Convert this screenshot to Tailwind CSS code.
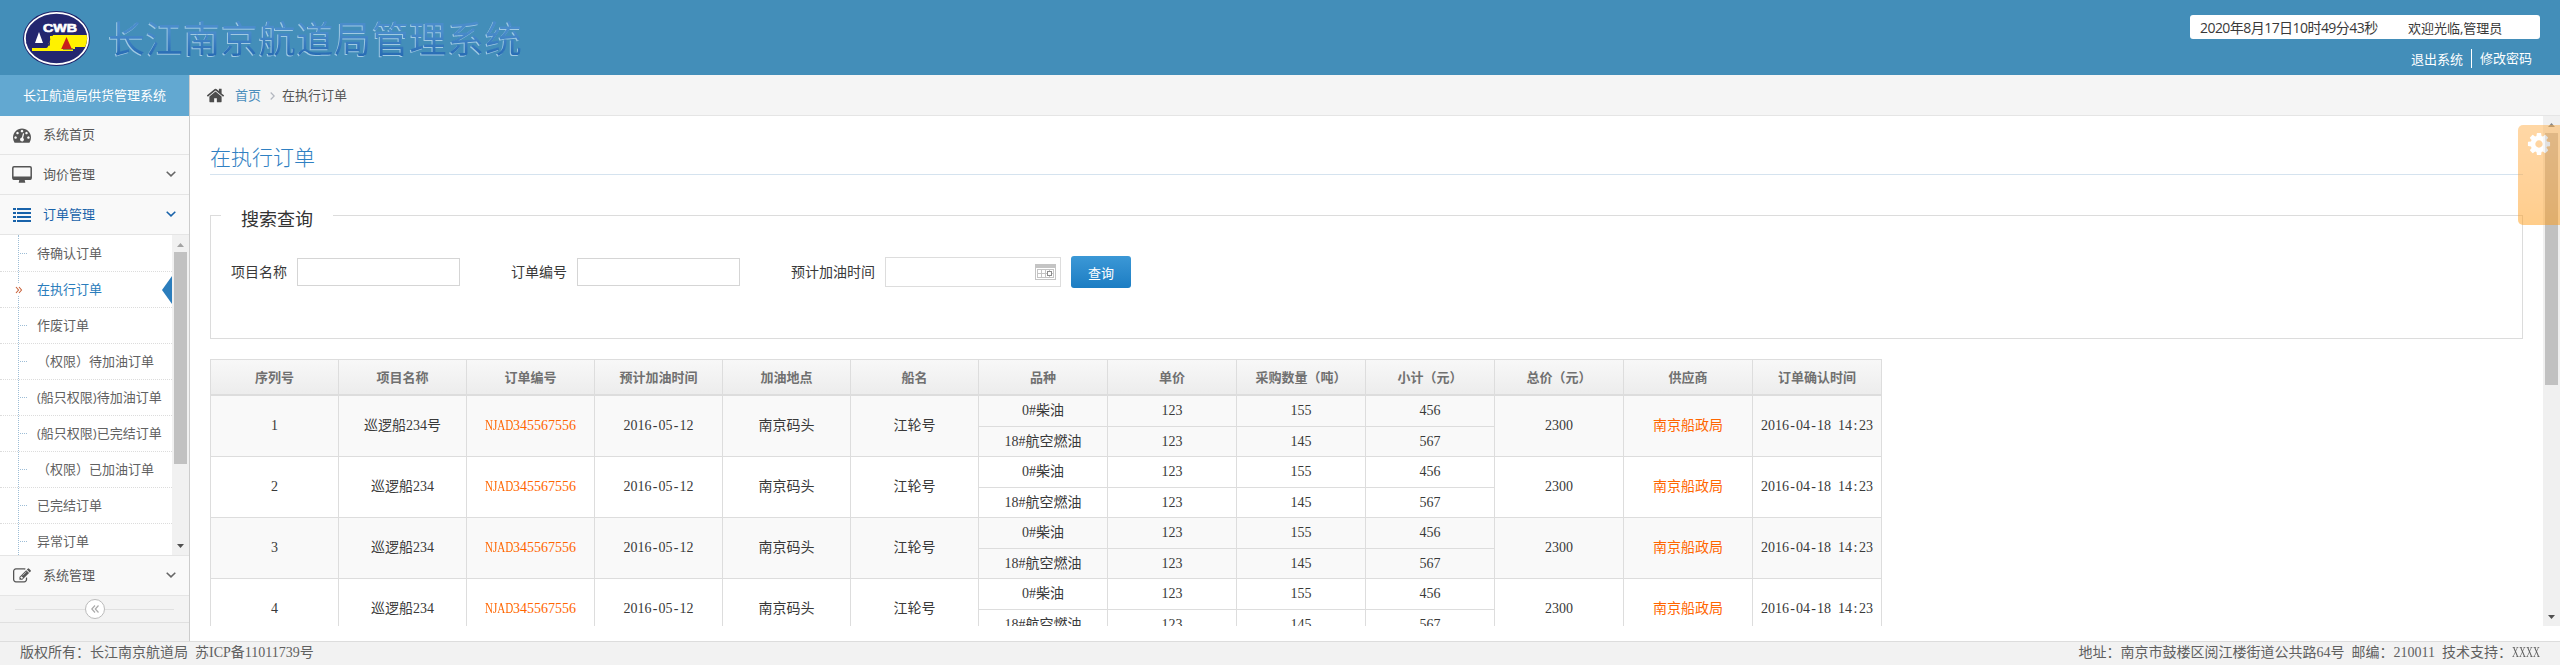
<!DOCTYPE html>
<html lang="zh-CN">
<head>
<meta charset="utf-8">
<title>长江南京航道局管理系统</title>
<script src="https://cdn.jsdelivr.net/npm/@tailwindcss/browser@4"></script>
</head>
<body class="w-[2560px] h-[665px] overflow-hidden flex flex-col bg-white text-[13px] leading-5 text-[#393939] font-['Open_Sans','Noto_Sans_CJK_SC',sans-serif]">

<header class="h-[75px] shrink-0 bg-[#438eb9] flex justify-between">
  <div class="flex pl-[23px]">
    <svg class="mt-[11px] w-[67px] h-[55px]" viewBox="0 0 67 55">
      <defs><clipPath id="disc"><ellipse cx="33.5" cy="27.5" rx="30.6" ry="24.6"/></clipPath></defs>
      <ellipse cx="33.5" cy="27.5" rx="33.5" ry="27.5" fill="#1d2069"/>
      <ellipse cx="33.5" cy="27.5" rx="31.6" ry="25.6" fill="#23266f" stroke="#fff" stroke-width="1.8"/>
      <g clip-path="url(#disc)">
        <path d="M27 24H67V36H52V38H50V40H9V37H22Q26 37 25 33Q28 30 27 27Z" fill="#fff200"/>
        <path d="M0 32H19Q22 32 22 34H26Q27 30 23 29.500V27Q24 24 30 24" fill="none" stroke="#23266f" stroke-width="1.500"/>
        <path d="M40 38H50" stroke="#23266f" stroke-width="1"/>
      </g>
      <path d="M16 21l4 11h-8z" fill="#fff"/>
      <path d="M43.500 26l5.300 12h-10.600z" fill="#c8201c"/>
      <text x="20" y="21.300" textLength="34" lengthAdjust="spacingAndGlyphs" font-family="Liberation Sans" font-weight="bold" font-size="11.500" fill="#fff" stroke="#fff" stroke-width=".6">CWB</text>
    </svg>
    <h1 class="ml-[18px] mt-[13px] text-[37px] leading-[52px] tracking-[0.7px] whitespace-nowrap bg-linear-to-b from-[#4a8ccb] from-30% to-[#1c62ad] to-80% bg-clip-text text-transparent [filter:drop-shadow(-1px_1px_0.5px_rgba(190,220,240,0.75))]">长江南京航道局管理系统</h1>
  </div>
  <div class="pt-[15px] pr-5 flex flex-col">
    <div class="w-[350px] h-6 rounded-[3px] bg-white flex items-center pl-[10px] whitespace-nowrap">
      <span class="w-[208px] pt-px text-[14px] tracking-[-0.55px]">2020年8月17日10时49分43秒</span><span class="pt-px">欢迎光临,管理员</span>
    </div>
    <div class="mt-[10px] h-[19px] flex justify-end items-center pr-2 text-white">
      <a class="pr-2">退出系统</a><a class="border-l border-white pl-2 h-[19px] leading-[19px]">修改密码</a>
    </div>
  </div>
</header>

<div class="h-[566px] shrink-0 flex">
  <aside class="w-[190px] shrink-0 border-r border-[#cccccc] bg-[#f2f2f2] flex flex-col text-[#585858]">
    <div class="h-[41px] bg-[#62a8d1] text-white text-center leading-[41px]">长江航道局供货管理系统</div>
    <a class="h-[39px] bg-[#f9f9f9] border-b border-[#e5e5e5] flex items-center pl-[13px]">
      <svg class="w-[18px] h-[18px] mr-3" viewBox="0 0 1792 1792" fill="#555"><path d="M384 1152q0-53-37.500-90.500t-90.500-37.500-90.500 37.500-37.500 90.500 37.500 90.500 90.500 37.500 90.500-37.500 37.500-90.500zm192-448q0-53-37.500-90.500t-90.500-37.500-90.500 37.500-37.500 90.500 37.500 90.500 90.500 37.500 90.500-37.500 37.500-90.500zm428 481l101-382q6-26-7.500-48.500t-38.500-29.500-48 6.500-30 39.500l-101 382q-60 5-107 43.500t-63 98.500q-20 77 20 146t117 89 146-20 89-117q16-60-6-117t-72-91zm660-33q0-53-37.500-90.500t-90.500-37.500-90.500 37.500-37.500 90.500 37.500 90.500 90.500 37.500 90.500-37.500 37.500-90.500zm-640-640q0-53-37.500-90.500t-90.500-37.500-90.500 37.500-37.500 90.500 37.500 90.500 90.500 37.500 90.500-37.500 37.500-90.500zm448 192q0-53-37.500-90.500t-90.500-37.500-90.500 37.500-37.500 90.500 37.500 90.500 90.500 37.500 90.500-37.500 37.500-90.500zm320 448q0 261-141 483-19 29-54 29h-1402q-35 0-54-29-141-221-141-483 0-182 71-348t191-286 286-191 348-71 348 71 286 191 191 286 71 348z"/></svg>
      <span class="pb-[2px]">系统首页</span>
    </a>
    <a class="h-10 bg-[#f9f9f9] border-b border-[#e5e5e5] flex items-center pl-3">
      <svg class="w-5 h-[17px] mr-[11px]" viewBox="0 0 20 17"><rect x=".8" y=".8" width="18.400" height="12.400" rx="1.200" fill="none" stroke="#555" stroke-width="1.500"/><path d="M1 10.500H19V13.500H1zM7.500 13h5l.8 3.700H6.700z" fill="#555"/></svg>
      <span class="pb-[2px]">询价管理</span>
      <svg class="w-[10px] h-[6px] ml-[71px] mb-px" viewBox="0 0 10 6"><path d="M.7.700L5 4.900 9.300.700" fill="none" stroke="#666" stroke-width="1.500"/></svg>
    </a>
    <a class="h-10 bg-[#f9f9f9] border-b border-[#e5e5e5] flex items-center pl-[13px] text-[#1963aa]">
      <svg class="w-[18px] h-[14px] mr-3" viewBox="0 0 18 14" fill="#1963aa"><path d="M0 0h3v2H0zM4 0h14v2H4zM0 4h3v2H0zM4 4h14v2H4zM0 8h3v2H0zM4 8h14v2H4zM0 12h3v2H0zM4 12h14v2H4z"/></svg>
      <span class="pb-[2px]">订单管理</span>
      <svg class="w-[10px] h-[6px] ml-[71px] mb-px" viewBox="0 0 10 6"><path d="M.7.700L5 4.900 9.300.700" fill="none" stroke="#1963aa" stroke-width="1.500"/></svg>
    </a>
    <div class="h-[321px] bg-white border-b border-[#e5e5e5] flex overflow-hidden">
      <div id="submenu" class="relative w-[172px] h-[320px] overflow-hidden text-[#616161] whitespace-nowrap">
        <div class="absolute z-10 left-[18px] top-0 h-full border-l border-dotted border-[#9dbdd6]"></div>
      </div>
      <div class="w-[17px] bg-[#f1f1f1] flex flex-col items-center">
        <svg class="w-[7px] h-[4px] mt-2" viewBox="0 0 7 4"><path d="M0 4L3.500 0 7 4z" fill="#a3a3a3"/></svg>
        <div class="mt-[5px] w-[13px] h-[212px] bg-[#c1c1c1]"></div>
        <svg class="w-[7px] h-[4px] mt-[80px]" viewBox="0 0 7 4"><path d="M0 0L3.500 4 7 0z" fill="#505050"/></svg>
      </div>
    </div>
    <a class="h-10 bg-[#f9f9f9] border-b border-[#e5e5e5] flex items-center pl-[13px]">
      <svg class="w-[18px] h-[18px] mr-3" viewBox="0 0 1792 1792" fill="#555"><path d="M888 1184l116-116-152-152-116 116v56h96v96h56zm440-720q-16-16-33 1l-350 350q-17 17-1 33t33-1l350-350q17-17 1-33zm80 594v190q0 119-84.500 203.500t-203.500 84.500h-832q-119 0-203.500-84.500t-84.500-203.500v-832q0-119 84.500-203.500t203.500-84.500h832q63 0 117 25 15 7 18 23 3 17-9 29l-49 49q-14 14-32 8-23-6-45-6h-832q-66 0-113 47t-47 113v832q0 66 47 113t113 47h832q66 0 113-47t47-113v-126q0-13 9-22l64-64q15-15 35-7t20 29zm-96-738l288 288-672 672h-288v-288zm444 132l-92 92-288-288 92-92q28-28 68-28t68 28l152 152q28 28 28 68t-28 68z"/></svg>
      <span class="pb-[2px]">系统管理</span>
      <svg class="w-[10px] h-[6px] ml-[71px] mb-px" viewBox="0 0 10 6"><path d="M.7.700L5 4.900 9.300.700" fill="none" stroke="#666" stroke-width="1.500"/></svg>
    </a>
    <div class="h-[27px] bg-[#f3f3f3] border-b border-[#e0e0e0] flex items-center pl-[15px]">
      <div class="w-[70px] h-px bg-[#e0e0e0]"></div>
      <div class="w-5 h-5 rounded-full border border-[#bbbbbb] bg-white flex items-center justify-center">
        <svg class="w-2 h-2" viewBox="0 0 8 8"><path d="M4 .5L.8 4 4 7.500M7.500.500L4.300 4l3.200 3.500" fill="none" stroke="#aaa" stroke-width="1.200"/></svg>
      </div>
      <div class="w-[69px] h-px bg-[#e0e0e0]"></div>
    </div>
  </aside>

  <main class="flex-1 flex flex-col">
    <nav class="h-[41px] shrink-0 bg-[#f5f5f5] border-b border-[#e5e5e5] flex items-center pl-[16px] text-[#555]">
      <svg class="w-[19px] h-[19px] mr-[10px]" viewBox="0 0 1792 1792" fill="#4d4d4d"><path d="M1472 992v480q0 26-19 45t-45 19h-384v-384h-256v384h-384q-26 0-45-19t-19-45v-480q0-1 .5-3t.5-3l575-474 575 474q1 2 1 6zm223-69l-62 74q-8 9-21 11h-3q-13 0-21-7l-692-577-692 577q-12 8-24 7-13-2-21-11l-62-74q-8-10-7-23.500t11-21.500l719-599q32-26 76-26t76 26l244 204v-195q0-14 9-23t23-9h192q14 0 23 9t9 23v408l219 182q10 8 11 21.500t-7 23.500z"/></svg>
      <a class="text-[#4c8fbd]">首页</a>
      <svg class="w-[5px] h-[8px] ml-[9px] mr-[7px] mt-[2px]" viewBox="0 0 5 8"><path d="M.7.500L4.200 4 .7 7.500" fill="none" stroke="#b2b6bf" stroke-width="1.200"/></svg>
      <span>在执行订单</span>
    </nav>
    <div class="h-[510px] flex overflow-hidden">
      <div class="w-[2353px] shrink-0 h-[510px] overflow-hidden pl-5 pr-5 pt-[26px]">
        <h2 class="h-[33px] border-b border-[#d5e3ef] text-[21px] leading-[30px] font-light text-[#2f80c2]">在执行订单</h2>
        <fieldset class="mt-[28px] h-[136px] border border-[#dcdcdc] pl-5">
          <legend class="ml-[-10px] h-[25px] w-[112px] pl-5 text-[18px] leading-[32px] text-[#333]">搜索查询</legend>
          <div class="mt-[28px] h-8 flex items-center text-[14px]">
            <label class="w-[66px]">项目名称</label>
            <div class="w-[163px] h-7 border border-[#d5d5d5]"></div>
            <label class="w-[66px] ml-[51px]">订单编号</label>
            <div class="w-[163px] h-7 border border-[#d5d5d5]"></div>
            <label class="w-[94px] ml-[51px]">预计加油时间</label>
            <div class="w-[176px] h-[30px] border border-[#dddddd] flex items-center justify-end pr-1">
              <svg class="w-[21px] h-4" viewBox="0 0 21 16" shape-rendering="crispEdges"><rect width="21" height="16" fill="#c4c4c4"/><rect x="1" y="4" width="19" height="11" fill="#fff"/><path d="M2 5h17v9H2z" fill="#c4c4c4"/><path d="M3 6h3v3H3zM7 6h3v3H7zM3 10h3v3H3zM7 10h3v3H7zM11 6h3v3h-3zM15 6h3v3h-3zM11 10h3v3h-3zM15 10h3v3h-3z" fill="#fff"/><rect x="12.500" y="7.500" width="4" height="4" fill="#fff" stroke="#8c8c8c"/></svg>
            </div>
            <button class="ml-[10px] w-[60px] h-8 rounded-[3px] bg-linear-to-b from-[#3b98d6] to-[#1b7dc3] text-white text-[13px] pt-[2px]">查询</button>
          </div>
        </fieldset>
        <div class="mt-5 w-[1672px] border-t border-l border-[#dddddd] text-center">
          <div id="thead" class="grid grid-cols-[repeat(6,128px)_repeat(7,129px)] font-bold text-[#707070] bg-linear-to-b from-[#f8f8f8] to-[#ececec]"></div>
          <div id="tbody" class="font-['Liberation_Serif','Noto_Sans_CJK_SC',serif] text-[14px] whitespace-nowrap"></div>
        </div>
      </div>
      <div class="w-[17px] shrink-0 bg-[#f0f0f0] flex flex-col items-center">
        <svg class="w-[7px] h-[4px] mt-[7px]" viewBox="0 0 7 4"><path d="M0 4L3.500 0 7 4z" fill="#868686"/></svg>
        <div class="mt-[6px] w-[13px] h-[252px] bg-[#c1c1c1]"></div>
        <svg class="w-[7px] h-[4px] mt-[230px]" viewBox="0 0 7 4"><path d="M0 0L3.500 4 7 0z" fill="#505050"/></svg>
      </div>
    </div>
  </main>
</div>

<footer class="h-6 shrink-0 border-t border-[#dddddd] bg-[#f2f2f2] flex justify-between pl-5 pr-5 text-[14px] leading-[22px] text-[#606060] whitespace-nowrap [word-spacing:3.5px] font-['Liberation_Serif','Noto_Sans_CJK_SC',serif]">
  <span>版权所有：长江南京航道局 苏ICP备11011739号</span>
  <span>地址：南京市鼓楼区阅江楼街道公共路64号 邮编：210011 技术支持：<span class="inline-block w-[28px]"><span class="inline-block origin-left scale-x-[0.69]">XXXX</span></span></span>
</footer>

<div class="absolute right-0 top-[125px] w-[42px] h-[100px] rounded-l-[5px] opacity-50 bg-linear-to-b from-[#ffb14e] to-[#ff9d18] pl-[9px] pt-[7px]">
  <svg class="w-6 h-6" viewBox="64 64 1664 1664" fill="#fff"><path d="M1152 896q0-106-75-181t-181-75-181 75-75 181 75 181 181 75 181-75 75-181zm512-109v222q0 12-8 23t-20 13l-185 28q-19 54-39 91 35 50 107 138 10 12 10 25t-9 23q-27 37-99 108t-94 71q-12 0-26-9l-138-108q-44 23-91 38-16 136-29 186-7 28-36 28h-222q-14 0-24.500-8.500t-11.500-21.500l-28-184q-49-16-90-37l-141 107q-10 9-25 9-14 0-25-11-126-114-165-168-7-10-7-23 0-12 8-23 15-21 51-66.500t54-70.500q-27-50-41-99l-183-27q-13-2-21-12.500t-8-23.500v-222q0-12 8-23t19-13l186-28q14-46 39-92-40-57-107-138-10-12-10-24 0-10 9-23 26-36 98.500-107.500t94.500-71.500q13 0 26 10l138 107q44-23 91-38 16-136 29-186 7-28 36-28h222q14 0 24.500 8.500t11.500 21.500l28 184q49 16 90 37l142-107q9-9 24-9 13 0 25 10 129 119 165 170 7 8 7 22 0 12-8 23-15 21-51 66.500t-54 70.500q26 50 41 98l183 28q13 2 21 12.500t8 23.500z"/></svg>
</div>

<script>
  const menu = ['待确认订单', '在执行订单', '作废订单', '（权限）待加油订单', '(船只权限)待加油订单', '(船只权限)已完结订单', '（权限）已加油订单', '已完结订单', '异常订单'];
  document.getElementById('submenu').insertAdjacentHTML('beforeend', menu.map((t, i) => {
    const on = i === 1;
    const lead = on
      ? '<svg class="relative z-20 w-[8px] h-[12px] ml-[15px] mr-[14px] bg-white" viewBox="0 0 8 12"><path d="M1 3l2.500 3L1 9M4 3l2.500 3L4 9" fill="none" stroke="#c86139" stroke-width="1.100"/></svg>'
      : '<div class="w-[7px] ml-5 mr-[10px] border-t border-dotted border-[#9dbdd6]"></div>';
    const tip = on ? '<svg class="ml-auto w-[10px] h-[28px]" viewBox="0 0 10 28"><path d="M10 0L0 14 10 28z" fill="#2b7dbc"/></svg>' : '';
    return '<a class="flex items-center ' + (on ? 'text-[#2b7dbc] ' : '') + (i === 0 ? 'h-[37px]' : 'h-[36px]') + ' border-b border-dotted border-[#dcdcdc]">' + lead + '<span class="pb-px">' + t + '</span>' + tip + '</a>';
  }).join(''));

  const heads = ['序列号', '项目名称', '订单编号', '预计加油时间', '加油地点', '船名', '品种', '单价', '采购数量（吨）', '小计（元）', '总价（元）', '供应商', '订单确认时间'];
  document.getElementById('thead').innerHTML = heads.map(t => '<div class="h-9 border-r border-b-2 border-[#dddddd] leading-[34px]">' + t + '</div>').join('');

  // Hyphens, colons and spaces take the same advance as a digit.
  const even = s => s.replace(/[-: ]/g, c => '<span class="inline-block w-[7px] text-center">' + (c === ' ' ? '&nbsp;' : c) + '</span>');
  const cell = t => '<div class="border-r border-b border-[#dddddd] leading-[59px]">' + t + '</div>';
  const split = (a, b) => '<div class="border-r border-b border-[#dddddd]"><div class="h-[31px] border-b border-[#dddddd] leading-[30px]">' + a + '</div><div class="h-[29px] leading-[29px]">' + b + '</div></div>';
  const code = '<span class="text-[#ff6600]"><span class="inline-block w-[28px]"><span class="inline-block origin-left scale-x-[0.79]">NJAD</span></span>345567556</span>';
  document.getElementById('tbody').innerHTML = [1, 2, 3, 4].map(n =>
    '<div class="grid grid-cols-[repeat(6,128px)_repeat(7,129px)] h-[61px] ' + (n % 2 ? 'bg-[#f9f9f9]' : 'bg-white') + '">' +
    cell(n) + cell(n === 1 ? '巡逻船234号' : '巡逻船234') + cell(code) + cell(even('2016-05-12')) + cell('南京码头') + cell('江轮号') +
    split('0#柴油', '18#航空燃油') + split('123', '123') + split('155', '145') + split('456', '567') +
    cell('2300') + cell('<span class="text-[#ff6600]">南京船政局</span>') + cell(even('2016-04-18 14:23')) + '</div>').join('');
</script>
</body>
</html>
